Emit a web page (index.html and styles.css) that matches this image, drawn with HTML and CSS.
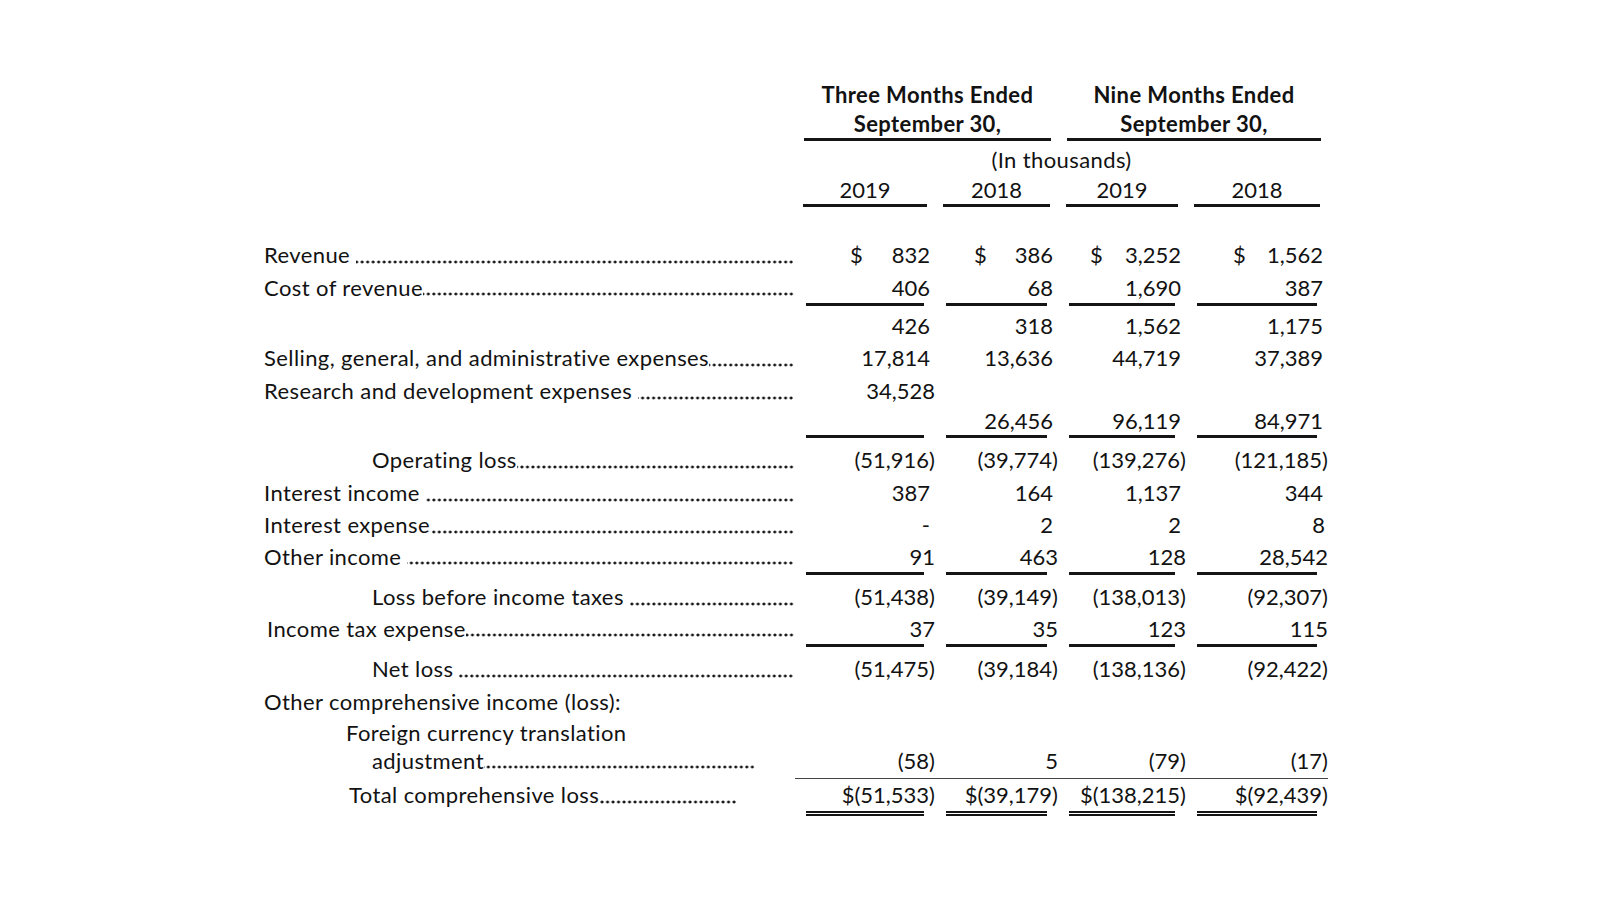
FILE: index.html
```html
<!DOCTYPE html>
<html lang="en">
<head>
<meta charset="utf-8">
<title>Statement of Operations</title>
<link rel="stylesheet" href="styles.css">
</head>
<body>
<div class="sheet">
  <div class="hdr">
    <div></div>
    <div class="period"><div class="period-in">Three Months Ended<br>September 30,</div></div>
    <div class="period"><div class="period-in">Nine Months Ended<br>September 30,</div></div>
  </div>
  <div class="units">
    <div></div>
    <div class="units-in">(In thousands)</div>
  </div>
  <div class="years">
    <div></div>
    <div class="yr"><span>2019</span></div>
    <div class="yr"><span>2018</span></div>
    <div class="yr"><span>2019</span></div>
    <div class="yr"><span>2018</span></div>
  </div>

  <div class="row first">
    <div class="lbl"><span class="t">Revenue&nbsp;</span><span class="dots"></span></div>
    <div class="num usd c1"><span>$</span><span class="p">832</span></div>
    <div class="num usd c2"><span>$</span><span class="p">386</span></div>
    <div class="num usd c3"><span>$</span><span class="p">3,252</span></div>
    <div class="num usd c4"><span>$</span><span class="p">1,562</span></div>
  </div>
  <div class="row short">
    <div class="lbl"><span class="t">Cost of revenue</span><span class="dots"></span></div>
    <div class="num"><span class="p">406</span></div>
    <div class="num"><span class="p">68</span></div>
    <div class="num"><span class="p">1,690</span></div>
    <div class="num"><span class="p">387</span></div>
  </div>
  <div class="rule"><div></div><div class="ln"></div><div class="ln"></div><div class="ln"></div><div class="ln"></div></div>
  <div class="row after-s">
    <div class="lbl"></div>
    <div class="num"><span class="p">426</span></div>
    <div class="num"><span class="p">318</span></div>
    <div class="num"><span class="p">1,562</span></div>
    <div class="num"><span class="p">1,175</span></div>
  </div>
  <div class="row">
    <div class="lbl"><span class="t">Selling, general, and administrative expenses</span><span class="dots"></span></div>
    <div class="num"><span class="p">17,814</span></div>
    <div class="num"><span class="p">13,636</span></div>
    <div class="num"><span class="p">44,719</span></div>
    <div class="num"><span class="p">37,389</span></div>
  </div>
  <div class="row">
    <div class="lbl"><span class="t">Research and development expenses&nbsp;</span><span class="dots"></span></div>
    <div class="num"><span>34,528</span></div>
    <div class="num"></div>
    <div class="num"></div>
    <div class="num"></div>
  </div>
  <div class="row tight">
    <div class="lbl"></div>
    <div class="num"></div>
    <div class="num"><span class="p">26,456</span></div>
    <div class="num"><span class="p">96,119</span></div>
    <div class="num"><span class="p">84,971</span></div>
  </div>
  <div class="rule"><div></div><div class="ln"></div><div class="ln"></div><div class="ln"></div><div class="ln"></div></div>
  <div class="row after">
    <div class="lbl ind"><span class="t">Operating loss</span><span class="dots"></span></div>
    <div class="num"><span>(51,916)</span></div>
    <div class="num"><span>(39,774)</span></div>
    <div class="num"><span>(139,276)</span></div>
    <div class="num"><span>(121,185)</span></div>
  </div>
  <div class="row">
    <div class="lbl"><span class="t">Interest income&nbsp;</span><span class="dots"></span></div>
    <div class="num"><span class="p">387</span></div>
    <div class="num"><span class="p">164</span></div>
    <div class="num"><span class="p">1,137</span></div>
    <div class="num"><span class="p">344</span></div>
  </div>
  <div class="row">
    <div class="lbl"><span class="t">Interest expense</span><span class="dots"></span></div>
    <div class="num"><span class="p">-</span></div>
    <div class="num"><span class="p">2</span></div>
    <div class="num"><span class="p">2</span></div>
    <div class="num"><span class="ph">8</span></div>
  </div>
  <div class="row short2">
    <div class="lbl"><span class="t">Other income&nbsp;</span><span class="dots"></span></div>
    <div class="num"><span>91</span></div>
    <div class="num"><span>463</span></div>
    <div class="num"><span>128</span></div>
    <div class="num"><span>28,542</span></div>
  </div>
  <div class="rule"><div></div><div class="ln"></div><div class="ln"></div><div class="ln"></div><div class="ln"></div></div>
  <div class="row after">
    <div class="lbl ind"><span class="t">Loss before income taxes&nbsp;</span><span class="dots"></span></div>
    <div class="num"><span>(51,438)</span></div>
    <div class="num"><span>(39,149)</span></div>
    <div class="num"><span>(138,013)</span></div>
    <div class="num"><span>(92,307)</span></div>
  </div>
  <div class="row short">
    <div class="lbl ind-s"><span class="t">Income tax expense</span><span class="dots"></span></div>
    <div class="num"><span>37</span></div>
    <div class="num"><span>35</span></div>
    <div class="num"><span>123</span></div>
    <div class="num"><span>115</span></div>
  </div>
  <div class="rule"><div></div><div class="ln"></div><div class="ln"></div><div class="ln"></div><div class="ln"></div></div>
  <div class="row after">
    <div class="lbl ind"><span class="t">Net loss&nbsp;</span><span class="dots"></span></div>
    <div class="num"><span>(51,475)</span></div>
    <div class="num"><span>(39,184)</span></div>
    <div class="num"><span>(138,136)</span></div>
    <div class="num"><span>(92,422)</span></div>
  </div>
  <div class="row">
    <div class="lbl"><span class="t">Other comprehensive income (loss):</span></div>
  </div>
  <div class="row foreign">
    <div class="lbl ind-f"><span class="t">Foreign currency translation</span></div>
  </div>
  <div class="row adj">
    <div class="lbl ind adj-l"><span class="t">adjustment</span><span class="dots"></span></div>
    <div class="num"><span>(58)</span></div>
    <div class="num"><span>5</span></div>
    <div class="num"><span>(79)</span></div>
    <div class="num"><span>(17)</span></div>
  </div>
  <div class="thin"><div></div><div class="thin-ln"></div></div>
  <div class="row total">
    <div class="lbl ind-t"><span class="t">Total comprehensive loss</span><span class="dots"></span></div>
    <div class="num"><span>$(51,533)</span></div>
    <div class="num"><span>$(39,179)</span></div>
    <div class="num"><span>$(138,215)</span></div>
    <div class="num"><span>$(92,439)</span></div>
  </div>
  <div class="dbl"><div></div><div class="dl"></div><div class="dl"></div><div class="dl"></div><div class="dl"></div></div>
</div>
</body>
</html>
```

FILE: styles.css
```css
html, body {
  margin: 0;
  padding: 0;
  background: #ffffff;
}

body {
  font-family: Lato, "Open Sans", "Liberation Sans", sans-serif;
  font-size: 22px;
  letter-spacing: 0.4px;
  color: #121212;
}

.sheet {
  padding: 79px 0 0 264px;
  width: 1064px;
}

.hdr,
.units,
.years,
.row,
.rule,
.thin,
.dbl {
  display: grid;
  grid-template-columns: 531px 140px 123px 128px 142px;
}

/* header */
.period {
  grid-column: span 2;
  font-weight: 700;
  text-align: center;
  line-height: 29px;
}

.period-in {
  margin: 0 7px 0 9px;
  padding-top: 1px;
  border-bottom: 3px solid #151515;
}

.units {
  margin-top: 4px;
  height: 30px;
  line-height: 30px;
}

.units-in {
  grid-column: span 4;
  text-align: center;
}

.years {
  height: 29px;
  line-height: 29px;
  letter-spacing: 0;
}

.yr {
  padding: 0 8px;
}

.yr span {
  display: block;
  text-align: center;
  border-bottom: 3px solid #151515;
  height: 29px;
}

/* body rows */
.row {
  height: 32.5px;
  line-height: 32.5px;
}

.row.first {
  margin-top: 35px;
}

.row.short {
  height: 31px;
  line-height: 31px;
}

.row.short2 {
  height: 30px;
  line-height: 30px;
}

.row.tight {
  height: 28px;
  line-height: 28px;
}

.row.after {
  margin-top: 6px;
}

.row.after-s {
  margin-top: 4px;
}

.row.foreign {
  height: 29px;
  line-height: 29px;
}

.row.adj {
  height: 31px;
  line-height: 27px;
}

.row.total {
  height: 32px;
  line-height: 32px;
}

.lbl {
  display: flex;
  white-space: nowrap;
  padding-right: 1px;
  min-width: 0;
}

.lbl .t {
  flex: none;
}

/* dot leaders */
.dots {
  flex: 1;
  min-width: 0;
  align-self: center;
  height: 4px;
  margin-top: 13.6px;
  background-image: radial-gradient(circle, #161616 0, #161616 1.2px, rgba(22, 22, 22, 0) 1.75px);
  background-size: 5.5px 4px;
  background-repeat: repeat-x;
  background-position: right center;
}

.adj .dots {
  align-self: flex-start;
  margin-top: 17.5px;
}

.ind {
  padding-left: 108px;
}

.ind-s {
  padding-left: 3px;
}

.ind-f {
  padding-left: 82px;
}

.adj-l {
  padding-right: 40px;
}

.ind-t {
  padding-left: 85px;
  padding-right: 58px;
}

.num {
  display: flex;
  justify-content: flex-end;
  white-space: nowrap;
  letter-spacing: 0;
}

.num .p {
  padding-right: 5px;
}

.num .ph {
  padding-right: 3px;
}

.usd {
  justify-content: space-between;
}

.usd.c1 { padding-left: 55px; }
.usd.c2 { padding-left: 39px; }
.usd.c3 { padding-left: 32px; }
.usd.c4 { padding-left: 47px; }

/* single rules under subtotal rows */
.rule {
  height: 3px;
}

.ln {
  margin: 0 11px;
  background: #151515;
}

/* thin line above total */
.thin {
  height: 1px;
}

.thin-ln {
  grid-column: span 4;
  background: #444444;
}

/* double underline */
.dbl {
  height: 5px;
}

.dl {
  margin: 0 11px;
  border-top: 2px solid #151515;
  border-bottom: 2px solid #151515;
}
```
